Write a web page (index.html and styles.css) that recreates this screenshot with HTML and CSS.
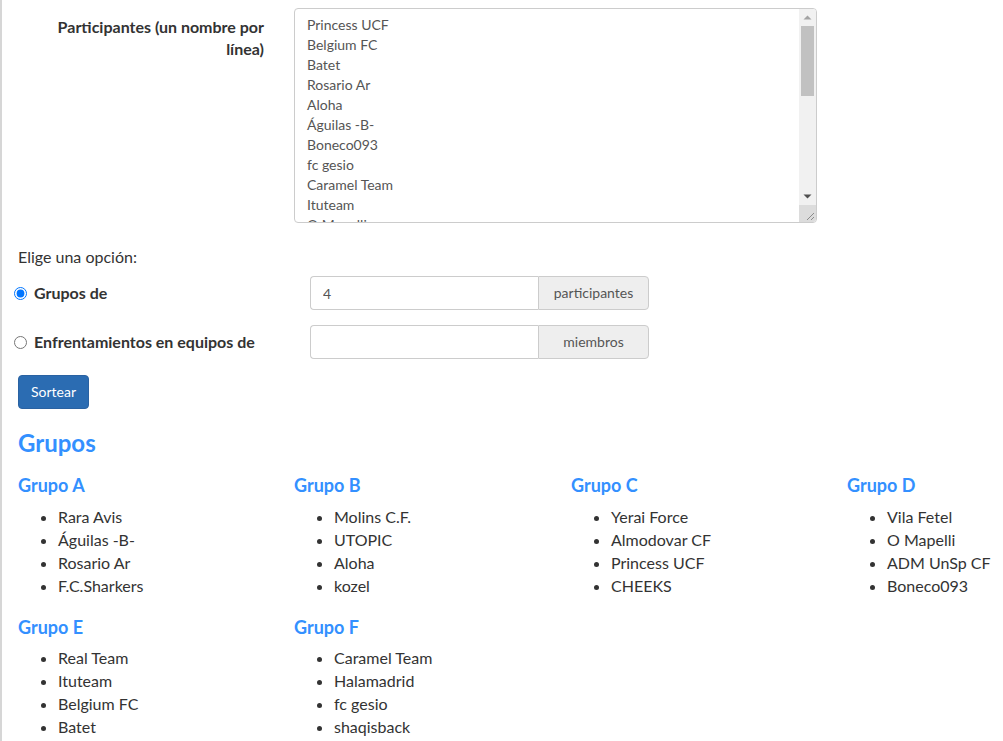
FILE: index.html
```html
<!DOCTYPE html>
<html lang="es">
<head>
<meta charset="utf-8">
<title>Sorteo</title>
<link rel="stylesheet" href="styles.css">
</head>
<body>
<div class="page">
  <form class="form">
    <div class="form-row">
      <label class="form-label" for="participantes">Participantes (un nombre por línea)</label>
      <div class="textarea-wrap">
        <textarea id="participantes" class="participants">Princess UCF
Belgium FC
Batet
Rosario Ar
Aloha
Águilas -B-
Boneco093
fc gesio
Caramel Team
Ituteam
O Mapelli
Rara Avis
F.C.Sharkers
Molins C.F.
UTOPIC
kozel
Yerai Force
Almodovar CF
CHEEKS
Vila Fetel
ADM UnSp CF
Real Team
Halamadrid
shaqisback
</textarea>
        <div class="scrollbar" aria-hidden="true">
          <span class="sb-btn">
            <svg width="9" height="5" viewBox="0 0 9 5"><path d="M0.5 4.5 L4.5 0.5 L8.5 4.5 Z" fill="#a3a3a3"/></svg>
          </span>
          <span class="sb-track"><span class="sb-thumb"></span></span>
          <span class="sb-btn">
            <svg width="9" height="5" viewBox="0 0 9 5"><path d="M0.5 0.5 L4.5 4.5 L8.5 0.5 Z" fill="#505050"/></svg>
          </span>
          <span class="sb-corner">
            <svg width="17" height="17" viewBox="0 0 17 17"><path d="M15 8 L8 15 M15 12 L12 15" stroke="#8a8a8a" stroke-width="1" fill="none"/></svg>
          </span>
        </div>
      </div>
    </div>

    <p class="choose">Elige una opción:</p>

    <div class="option-row">
      <label class="radio-label"><input type="radio" name="modo" checked> Grupos de</label>
      <div class="input-group">
        <input class="input-field" type="text" value="4">
        <span class="addon">participantes</span>
      </div>
    </div>

    <div class="option-row">
      <label class="radio-label"><input type="radio" name="modo"> Enfrentamientos en equipos de</label>
      <div class="input-group">
        <input class="input-field" type="text" value="">
        <span class="addon">miembros</span>
      </div>
    </div>

    <button type="button" class="btn-primary">Sortear</button>
  </form>

  <h2 class="section-title">Grupos</h2>

  <div class="groups">
    <div class="group">
      <h3 class="group-title">Grupo A</h3>
      <ul class="group-list"><li>Rara Avis</li><li>Águilas -B-</li><li>Rosario Ar</li><li>F.C.Sharkers</li></ul>
    </div>
    <div class="group">
      <h3 class="group-title">Grupo B</h3>
      <ul class="group-list"><li>Molins C.F.</li><li>UTOPIC</li><li>Aloha</li><li>kozel</li></ul>
    </div>
    <div class="group">
      <h3 class="group-title">Grupo C</h3>
      <ul class="group-list"><li>Yerai Force</li><li>Almodovar CF</li><li>Princess UCF</li><li>CHEEKS</li></ul>
    </div>
    <div class="group">
      <h3 class="group-title">Grupo D</h3>
      <ul class="group-list"><li>Vila Fetel</li><li>O Mapelli</li><li>ADM UnSp CF</li><li>Boneco093</li></ul>
    </div>
    <div class="group">
      <h3 class="group-title">Grupo E</h3>
      <ul class="group-list"><li>Real Team</li><li>Ituteam</li><li>Belgium FC</li><li>Batet</li></ul>
    </div>
    <div class="group">
      <h3 class="group-title">Grupo F</h3>
      <ul class="group-list"><li>Caramel Team</li><li>Halamadrid</li><li>fc gesio</li><li>shaqisback</li></ul>
    </div>
  </div>
</div>
</body>
</html>
```

FILE: styles.css
```css
html {
  overflow: hidden;
}

body {
  margin: 0;
  font-family: Lato, "Open Sans", "Liberation Sans", sans-serif;
  font-size: 16px;
  line-height: 1.42857;
  color: #333;
  background: #fff;
}

.page {
  border-left: 2px solid #d6d6d6;
  padding: 8px 0 0 16px;
  min-height: 100vh;
  box-sizing: border-box;
}

.form-row {
  display: flex;
  align-items: flex-start;
}

.form-label {
  width: 246px;
  flex: none;
  text-align: right;
  font-weight: 700;
  font-size: 16px;
  line-height: 22px;
  padding-top: 8px;
  margin-right: 30px;
}

.textarea-wrap {
  position: relative;
  width: 523px;
  height: 215px;
}

.participants {
  display: block;
  width: 100%;
  height: 100%;
  box-sizing: border-box;
  border: 1px solid #ccc;
  border-radius: 4px;
  padding: 6px 29px 6px 12px;
  font-family: Lato, "Open Sans", "Liberation Sans", sans-serif;
  font-size: 14px;
  line-height: 20px;
  color: #555;
  overflow: hidden;
  resize: none;
  margin: 0;
}

.scrollbar {
  position: absolute;
  top: 1px;
  right: 1px;
  bottom: 1px;
  width: 17px;
  display: flex;
  flex-direction: column;
  background: #f1f1f1;
  border-radius: 0 3px 3px 0;
  overflow: hidden;
}

.sb-btn {
  height: 17px;
  flex: none;
  display: flex;
  align-items: center;
  justify-content: center;
}

.sb-track {
  flex: 1;
  display: flex;
  flex-direction: column;
  padding: 0 2px;
}

.sb-thumb {
  height: 70px;
  background: #c1c1c1;
}

.sb-corner {
  height: 17px;
  flex: none;
  background: #dcdcdc;
  display: block;
}

.sb-corner svg {
  display: block;
}

.choose {
  margin: 23px 0 8px;
  font-size: 16px;
  line-height: 22px;
}

.option-row {
  display: flex;
  align-items: center;
  margin-bottom: 15px;
}

.radio-label {
  width: 296px;
  flex: none;
  margin-left: -4px;
  font-weight: 700;
  font-size: 16px;
  display: flex;
  align-items: center;
}

.radio-label input {
  margin: 0 7px 0 0;
  width: 13px;
  height: 13px;
}

.input-group {
  display: flex;
  width: 339px;
  height: 34px;
}

.input-field {
  flex: 1;
  min-width: 0;
  box-sizing: border-box;
  height: 34px;
  border: 1px solid #ccc;
  border-right: 0;
  border-radius: 4px 0 0 4px;
  padding: 6px 12px;
  font-family: Lato, "Open Sans", "Liberation Sans", sans-serif;
  font-size: 14px;
  color: #555;
  margin: 0;
}

.addon {
  width: 111px;
  flex: none;
  box-sizing: border-box;
  background: #eee;
  border: 1px solid #ccc;
  border-radius: 0 4px 4px 0;
  font-size: 14px;
  color: #555;
  display: flex;
  align-items: center;
  justify-content: center;
}

.btn-primary {
  margin-top: 1px;
  height: 34px;
  padding: 6px 12px;
  border: 1px solid #2a62a2;
  border-radius: 4px;
  background: #2b6cb2;
  color: #fff;
  font-family: Lato, "Open Sans", "Liberation Sans", sans-serif;
  font-size: 14px;
  line-height: 20px;
}

.section-title {
  margin: 21px 0 0;
  font-size: 24px;
  line-height: 1.1;
  font-weight: 700;
  color: #3390ff;
}

.groups {
  display: grid;
  grid-template-columns: 276px 277px 276px 1fr;
  row-gap: 20px;
  margin-top: 20px;
}

.group-title {
  margin: 0 0 10px;
  font-size: 18px;
  line-height: 1.1;
  font-weight: 700;
  color: #3390ff;
}

.group-list {
  margin: 0;
  padding-left: 40px;
}
```
